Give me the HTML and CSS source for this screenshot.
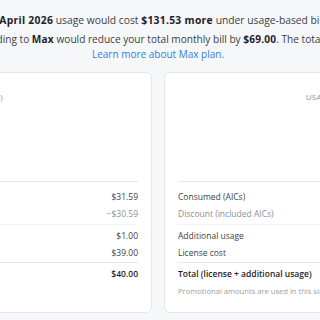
FILE: index.html
```html
<!DOCTYPE html>
<html lang="en">
<head>
    <meta charset="UTF-8">
    <title>Plan comparison</title>
    <link rel="stylesheet" href="styles.css">
</head>
<body>
<div class="page">
    <div class="notice">
        <div class="lead">Your <b>April 2026</b> usage would cost <b>$131.53 more</b> under usage-based billing.</div>
        <div class="line">Upgrading to <b>Max</b> would reduce your total monthly bill by <b>$69.00</b>. The total: $40.</div>
        <div class="link-line"><a href="#">Learn more about Max plan.</a></div>
    </div>

    <div class="compare">
        <div class="card">
            <div class="card-title">Pro plan (active)</div>
            <div class="summary"></div>
            <div class="breakdown">
                <div class="group">
                    <div class="row"><span>Consumed (AICs)</span><span>$31.59</span></div>
                    <div class="row muted"><span>Discount (included AICs)</span><span>&minus;$30.59</span></div>
                </div>
                <div class="group">
                    <div class="row"><span>Additional usage</span><span>$1.00</span></div>
                    <div class="row"><span>License cost</span><span>$39.00</span></div>
                </div>
                <div class="group last">
                    <div class="row total"><span>Total (license + additional usage)</span><span>$40.00</span></div>
                </div>
                <div class="note">Promotional amounts are used in this simulation.</div>
            </div>
        </div>

        <div class="card">
            <div class="card-title">Usage-based billing</div>
            <div class="summary"></div>
            <div class="breakdown">
                <div class="group">
                    <div class="row"><span>Consumed (AICs)</span><span>$171.12</span></div>
                    <div class="row muted"><span>Discount (included AICs)</span><span>&minus;$0.00</span></div>
                </div>
                <div class="group">
                    <div class="row"><span>Additional usage</span><span>$171.53</span></div>
                    <div class="row"><span>License cost</span><span>$0.00</span></div>
                </div>
                <div class="group last">
                    <div class="row total"><span>Total (license + additional usage)</span><span>$171.53</span></div>
                </div>
                <div class="note">Promotional amounts are used in this simulation.</div>
            </div>
        </div>
    </div>
</div>
</body>
</html>
```

FILE: styles.css
```css
body {
    margin: 0;
    background: #f6f7f9;
    font-family: "Open Sans", "Noto Sans", sans-serif;
    color: #3a3f45;
    overflow: hidden;
}
.page {
    width: 760px;
    margin-left: -222px;
    padding-top: 13px;
}
.notice {
    text-align: center;
    font-size: 10.3px;
    line-height: 15px;
    white-space: nowrap;
}
.notice b {
    color: #1f2328;
    font-weight: 700;
    letter-spacing: 0.3px;
}
.lead {
    margin-bottom: 4px;
}
.line {
    font-size: 10.1px;
}
.line b {
    letter-spacing: 0.2px;
}
.link-line {
    font-size: 10px;
}
.notice a {
    color: #2f7fe3;
    text-decoration: none;
}
.compare {
    display: grid;
    grid-template-columns: 1fr 1fr;
    gap: 12px;
    margin-top: 10px;
}
.card {
    background: #fff;
    border: 1px solid #e3e6ea;
    border-radius: 6px;
    padding: 18px 13px 15px;
}
.card-title {
    text-align: center;
    font-size: 8px;
    line-height: 12px;
    text-transform: uppercase;
    letter-spacing: 0.3px;
    color: #8b9097;
}
.summary {
    height: 78px;
}
.breakdown {
    border-top: 1px solid #e6e8eb;
    padding-top: 6px;
}
.group {
    padding: 0 0 2px;
    border-bottom: 1px solid #f1f2f4;
}
.group + .group {
    padding-top: 2px;
    padding-bottom: 1px;
    border-bottom-color: #e3e6ea;
}
.group.last {
    border-bottom: none;
    padding-bottom: 0;
}
.row {
    display: flex;
    justify-content: space-between;
    font-size: 8.5px;
    line-height: 17px;
    color: #3a3f45;
}
.row.muted {
    color: #8b9097;
}
.row.total {
    font-weight: 600;
    color: #1f2328;
}
.note {
    margin-top: 3px;
    font-size: 7.6px;
    line-height: 12px;
    color: #9aa0a6;
}
```
